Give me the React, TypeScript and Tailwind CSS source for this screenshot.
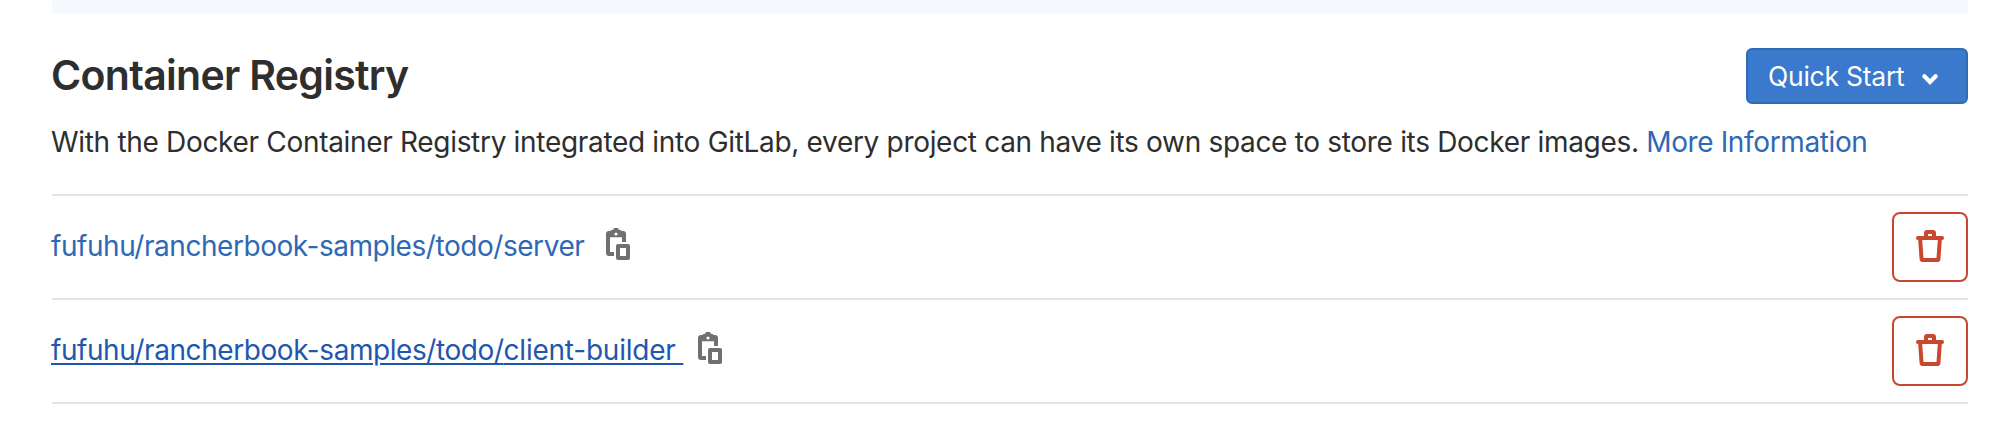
import type { ReactNode } from "react";

function ClipboardIcon() {
  return (
    <svg viewBox="0 0 16 16" className="mb-1.5 size-8 shrink-0 fill-[#707070]" aria-hidden="true">
      <path
        fillRule="evenodd"
        d="M2.500 1.500H3.100Q3.700.8 4.800.7A1.200 1.200 0 0 1 7.200.7Q8.300.8 8.900 1.500H9.500A1.500 1.500 0 0 1 11 3V7H9V4.600H3V12h2v2H2.500A1.500 1.500 0 0 1 1 12.500V3A1.500 1.500 0 0 1 2.500 1.500zM6 2.200a.8.8 0 1 0 0 1.600.8.8 0 0 0 0-1.600zM7 8h5a1 1 0 0 1 1 1v6a1 1 0 0 1-1 1H7a1 1 0 0 1-1-1V9a1 1 0 0 1 1-1zm1 2v4h3v-4z"
      />
    </svg>
  );
}

function TrashIcon() {
  return (
    <svg viewBox="0 0 16 16" className="size-8 fill-[#c9472f]" aria-hidden="true">
      <path
        fillRule="evenodd"
        d="M5 3V1.500A1.500 1.500 0 0 1 6.500 0h3A1.500 1.500 0 0 1 11 1.500V3h3a1 1 0 1 1 0 2h-.1l-.7 9.600A1.500 1.500 0 0 1 11.700 16H4.300a1.500 1.500 0 0 1-1.500-1.400L2.100 5H2a1 1 0 0 1 0-2zm2 0h2V2H7zM4.100 5l.65 9h6.500l.65-9z"
      />
    </svg>
  );
}

function ImageRow({ children }: { children: ReactNode }) {
  return (
    <li className="flex h-[104px] items-center justify-between border-b-2 border-[#e4e4e4]">
      <div className="-ml-px flex items-center">{children}</div>
      <button
        type="button"
        aria-label="Remove repository"
        className="flex h-[70px] w-[76px] items-center justify-center rounded-lg border-2 border-[#c9472f] bg-white pb-0.5"
      >
        <TrashIcon />
      </button>
    </li>
  );
}

export default function App() {
  return (
    <main className="h-[448px] bg-white pl-[52px] pr-[38px] font-['Inter',sans-serif] text-[28px] leading-10 text-[#2e2e2e]">
      <div className="h-3.5 bg-[#f6faff]" />

      <header className="flex h-[90px] items-end justify-between">
        <h1 className="mb-[3px] -ml-px text-[41px] leading-[52px] font-semibold tracking-[-0.7px]">
          Container Registry
        </h1>
        <button
          type="button"
          className="flex h-14 w-[222px] items-center rounded-md border-2 border-[#2f6ab2] bg-[#3a79cb] pl-5 text-[26.5px] tracking-[-0.25px] text-white"
        >
          Quick Start
          <svg viewBox="0 0 16 11" className="mt-[7px] ml-[18px] h-[11px] w-4" fill="none" aria-hidden="true">
            <path d="M2.400 2.200 8 7.900 13.600 2.200" stroke="white" strokeWidth="4.200" strokeLinecap="round" />
          </svg>
        </button>
      </header>

      <p className="mt-[18px] -ml-px whitespace-nowrap tracking-[-0.315px]">
        With the Docker Container Registry integrated into GitLab, every project can have its own
        space to store its Docker images.{" "}
        <a href="#" className="tracking-[-0.37px] text-[#2f68b4]">
          More Information
        </a>
      </p>

      <ul className="mt-8 border-t-2 border-[#e4e4e4]">
        <ImageRow>
          <a href="#" className="mb-0.5 w-[553px] whitespace-pre tracking-[-0.45px] text-[#2f68b4]">
            fufuhu/rancherbook-samples/todo/server
          </a>
          <ClipboardIcon />
        </ImageRow>
        <ImageRow>
          <a
            href="#"
            className="mb-0.5 w-[645px] whitespace-pre tracking-[-0.43px] text-[#1f57ae] underline decoration-2 underline-offset-[3px]"
          >
            fufuhu/rancherbook-samples/todo/
            <span className="tracking-[-0.22px]">{"client-builder "}</span>
          </a>
          <ClipboardIcon />
        </ImageRow>
      </ul>
    </main>
  );
}
